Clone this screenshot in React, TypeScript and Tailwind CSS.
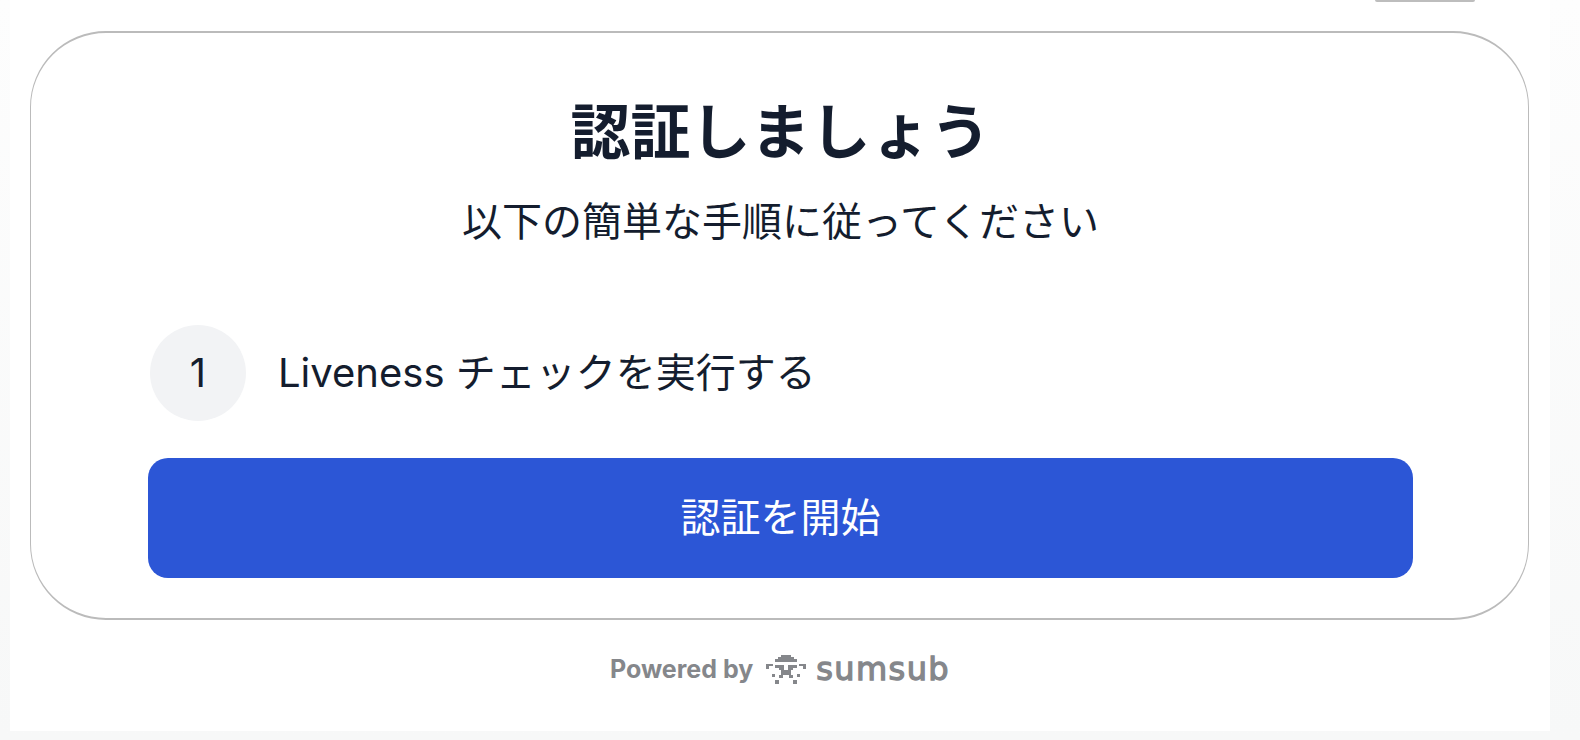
const SANS = "font-['Inter','Noto_Sans_CJK_JP',sans-serif]";

function SumsubMark() {
  return (
    <svg width="40" height="29" viewBox="0 0 40 29" fill="#85878b" shapeRendering="crispEdges">
      <path d="M15 0h10v2h3v2h3v3H9V4h3V2h3z" />
      <path d="M0 9h7v2H3v3H0zM33 9h7v5h-3v-3h-4z" />
      <path d="M9 10h9v5h-5v-2H9zM22 10h9v3h-4v2h-5z" />
      <path d="M15 15h10v5h2v3h-4v-3h-6v3h-4v-3h2z" />
      <path d="M6 19h3v3H6zM31 19h3v3h-3zM9 25h4v4H9zM27 25h4v4h-4z" />
    </svg>
  );
}

export default function App() {
  return (
    <div className={`${SANS} h-[740px] w-[1580px] overflow-hidden bg-gradient-to-b from-[#fdfdfd] to-[#f7f8f8] text-[#141d2e]`}>
      <div className="ml-[10px] flex h-[731px] w-[1540px] flex-col bg-white">
        <div className="ml-[1365px] h-[2px] w-[100px] rounded-b-full bg-[#bdbdbd]" />
        <section className="ml-[20px] mt-[29px] flex h-[589px] w-[1499px] flex-col rounded-[76px] border-x border-y-2 border-[#bbbbbb] bg-white pl-[117px] pr-[115px]">
          <h1 className="mt-[63px] text-center text-[60px] leading-[72px] font-bold">認証しましょう</h1>
          <p className="mt-[26px] text-center text-[40px] leading-[56px]">以下の簡単な手順に従ってください</p>
          <div className="mt-[75px] flex items-center gap-[32px]">
            <div className="ml-[2px] flex h-[96px] w-[96px] items-center justify-center rounded-full bg-[#f2f3f5] text-[40px]">1</div>
            <span className="text-[40px] leading-[56px]">Liveness チェックを実行する</span>
          </div>
          <button className="mt-[37px] h-[120px] w-full rounded-[20px] bg-[#2c56d6] text-[40px] text-white">認証を開始</button>
        </section>
        <footer className="mt-[34px] flex items-center justify-center text-[#85878b]">
          <span className="text-[25px] leading-[30px] font-bold">Powered by</span>
          <div className="ml-[13px] mr-[10px]">
            <SumsubMark />
          </div>
          <span className="font-['DejaVu_Sans',sans-serif] text-[32px] leading-[30px] tracking-[1.4px] [-webkit-text-stroke:1.3px_#85878b]">sumsub</span>
        </footer>
      </div>
    </div>
  );
}
